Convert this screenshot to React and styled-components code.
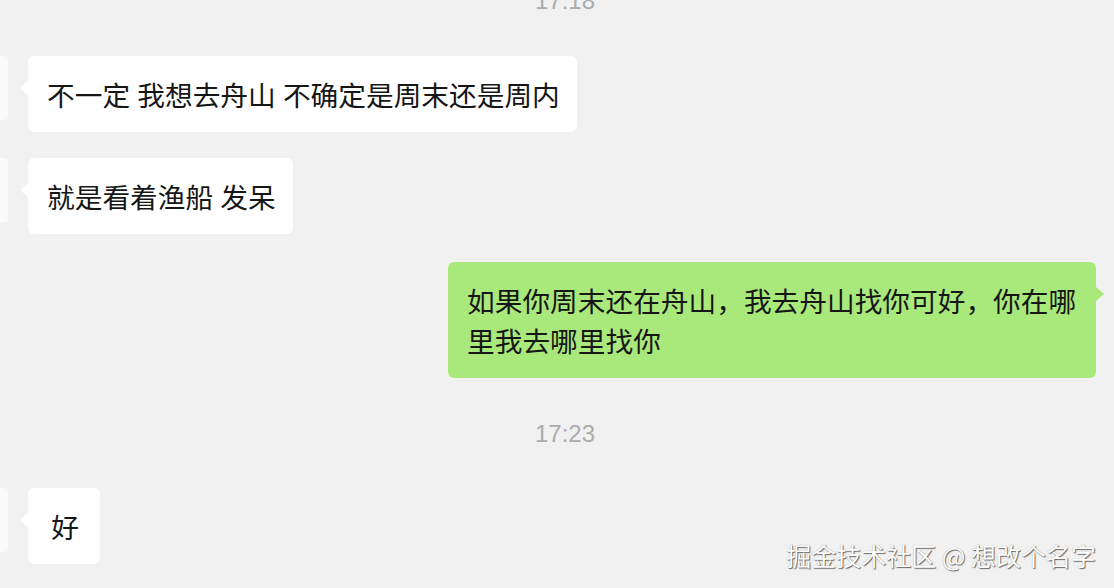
import React from 'react'
import styled, { createGlobalStyle } from 'styled-components'

const GlobalStyle = createGlobalStyle`
body {
    margin: 0;
    background: #f1f1f1;
    overflow: hidden;
    font-family: "Noto Sans CJK SC", "Noto Sans", sans-serif;
}
`

const Screen = styled.div`
position: relative;
width: 1114px;
height: 588px;
overflow: hidden;
background: #f1f1f1;
`

const Chat = styled.div`
display: flex;
flex-direction: column;
padding-right: 18px;
`

const Time = styled.div`
margin-top: ${p => p.top}px;
padding-left: 34px;
height: 32px;
line-height: 32px;
text-align: center;
font-family: "Liberation Sans", Arial, sans-serif;
font-size: 24px;
color: #ababab;
`

const Row = styled.div`
display: flex;
align-items: flex-start;
justify-content: ${p => (p.mine ? 'flex-end' : 'flex-start')};
gap: 20px;
margin-top: ${p => p.top}px;
`

const Avatar = styled.div`
flex: none;
width: 64px;
height: 64px;
margin-left: -56px;
border-radius: 4px;
background: #fbfbfb;
`

const Bubble = styled.div`
position: relative;
box-sizing: border-box;
max-width: 648px;
min-width: 72px;
padding: 18px 17px 18px 19px;
border-radius: 6px;
background: ${p => (p.mine ? '#a9e97c' : '#ffffff')};
color: #161616;
font-size: 27.7px;
line-height: 40px;
word-spacing: 1px;
text-align: ${p => (p.center ? 'center' : 'left')};
&::before{
    content: "";
    position: absolute;
    top: 25px;
    ${p => (p.mine ? 'right: -8px;' : 'left: -8px;')}
    border-top: 7px solid transparent;
    border-bottom: 7px solid transparent;
    ${p => (p.mine
        ? 'border-left: 8px solid #a9e97c;'
        : 'border-right: 8px solid #ffffff;')}
}
`

const Watermark = styled.div`
position: absolute;
right: 18px;
bottom: 19px;
font-size: 25px;
line-height: 28px;
color: #ffffff;
text-shadow: 1px 1px 1px rgba(0, 0, 0, 0.55), 0 0 1px rgba(0, 0, 0, 0.35);
`

export default function App() {
    return (
        <>
            <GlobalStyle/>
            <Screen>
                <Chat>
                    <Time top={-15}>17:18</Time>
                    <Row top={39}>
                        <Avatar/>
                        <Bubble>不一定 我想去舟山 不确定是周末还是周内</Bubble>
                    </Row>
                    <Row top={26}>
                        <Avatar/>
                        <Bubble>就是看着渔船 发呆</Bubble>
                    </Row>
                    <Row top={28} mine>
                        <Bubble mine>如果你周末还在舟山，我去舟山找你可好，你在哪里我去哪里找你</Bubble>
                    </Row>
                    <Time top={40}>17:23</Time>
                    <Row top={38}>
                        <Avatar/>
                        <Bubble center>好</Bubble>
                    </Row>
                </Chat>
                <Watermark>掘金技术社区 @ 想改个名字</Watermark>
            </Screen>
        </>
    )
}
